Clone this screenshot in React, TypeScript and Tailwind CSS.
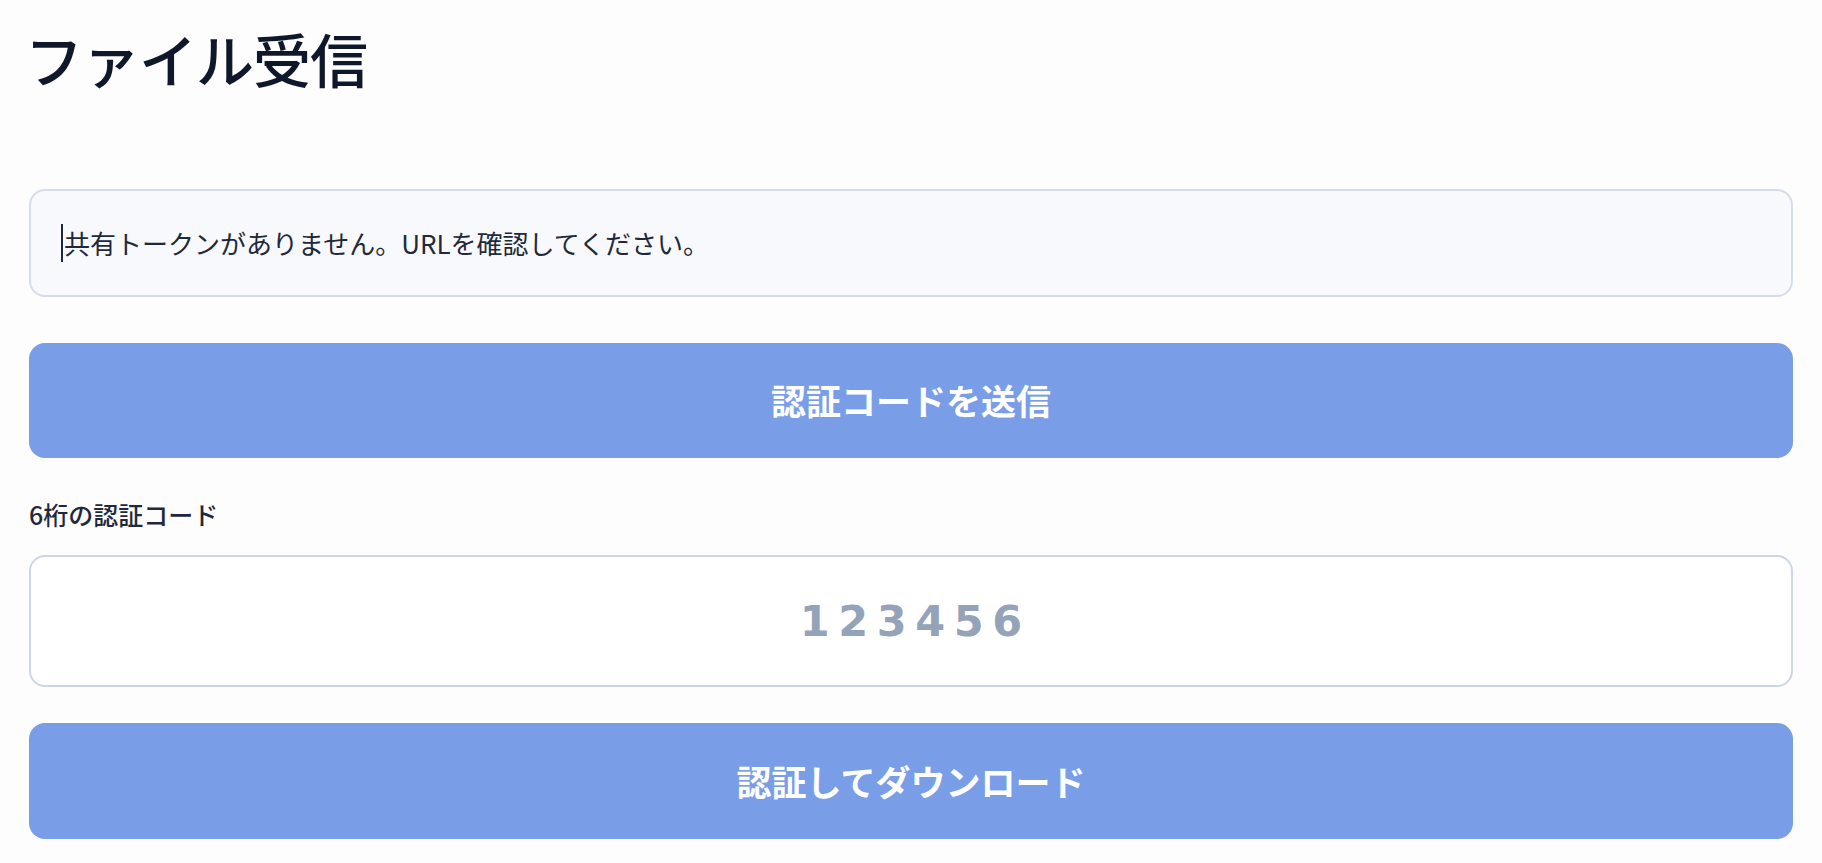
import React from 'react';

const jp = { fontFamily: '"Noto Sans CJK JP", "Noto Sans", sans-serif' };

export default function App() {
  return (
    <div className="min-h-screen bg-[#fdfdfe] px-[29px] pt-[22px]" style={jp}>
      {/* Title */}
      <h1 className="-ml-[4px] text-[58px] font-medium leading-[1.25] text-[#0f172a] tracking-[-1px]">
        ファイル受信
      </h1>

      <div className="mt-[94px] flex flex-col">
        {/* Token notice (read-only field) */}
        <div className="flex h-[108px] items-center rounded-[16px] border-2 border-[#d6dde9] bg-[#f8f9fc] px-[30px] text-[26px] text-[#1e293b]">
          <span className="mr-[1px] inline-block h-[38px] w-[2px] bg-[#1e293b]" />
          共有トークンがありません。URLを確認してください。
        </div>

        <button className="mt-[46px] h-[115px] w-full rounded-[16px] bg-[#799de6] text-[35px] font-bold text-white">
          認証コードを送信
        </button>

        {/* Code input */}
        <label className="mt-[40px] text-[25px] font-medium leading-[1.3] text-[#1e293b]">
          6桁の認証コード
        </label>
        <div className="mt-[25px] flex h-[132px] items-center justify-center rounded-[16px] border-2 border-[#cdd6e4] bg-white">
          <span
            className="pl-[0.2em] text-[43px] font-bold tracking-[0.2em] text-[#94a3b8]"
            style={{ fontFamily: '"DejaVu Sans", "Liberation Sans", sans-serif' }}
          >
            123456
          </span>
        </div>

        <button className="mt-[36px] h-[116px] w-full rounded-[16px] bg-[#799de6] text-[35px] font-bold text-white">
          認証してダウンロード
        </button>
      </div>
    </div>
  );
}
